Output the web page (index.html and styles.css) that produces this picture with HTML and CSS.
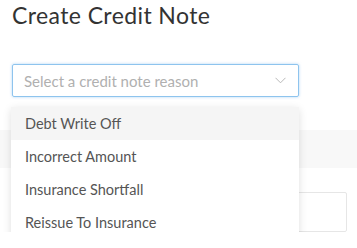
FILE: index.html
```html
<!DOCTYPE html>
<html>
<head>
<meta charset="utf-8">
<link rel="stylesheet" href="styles.css">
</head>
<body>
<div class="page">
  <h1 class="title">Create Credit Note</h1>
  <div class="field">
    <div class="select">
      <span class="placeholder">Select a credit note reason</span>
      <svg class="chevron" width="11" height="7" viewBox="0 0 11 7"><polyline points="0.5,0.8 5.5,5.8 10.5,0.8" fill="none" stroke="#b8b8b8" stroke-width="1"/></svg>
    </div>
    <ul class="menu">
      <li class="item active">Debt Write Off</li>
      <li class="item">Incorrect Amount</li>
      <li class="item">Insurance Shortfall</li>
      <li class="item">Reissue To Insurance</li>
    </ul>
  </div>
</div>
<div class="band"></div>
<div class="page">
  <div class="input"></div>
</div>
</body>
</html>
```
FILE: styles.css
```css
html, body {
  margin: 0;
  padding: 0;
  background: #ffffff;
  font-family: Lato, "Liberation Sans", sans-serif;
}
.page {
  padding: 0 10px 0 12px;
}
.title {
  margin: 0;
  font-size: 23px;
  line-height: 30px;
  font-weight: 400;
  color: #333333;
  letter-spacing: 0.4px;
}
.field {
  position: relative;
  margin-top: 34px;
  width: 287px;
}
.select {
  box-sizing: border-box;
  height: 33px;
  border: 1px solid #8ec4ee;
  border-radius: 2px;
  box-shadow: 0 0 3px rgba(110, 175, 235, 0.55);
  display: flex;
  align-items: center;
  justify-content: space-between;
  padding: 0 12px 0 11px;
}
.placeholder {
  font-size: 15px;
  color: #b0b0b0;
}
.chevron {
  display: block;
}
.menu {
  position: absolute;
  z-index: 2;
  top: 43px;
  left: -1px;
  width: 288px;
  margin: 0;
  padding: 0 0 5px 0;
  list-style: none;
  background: #ffffff;
  box-shadow: 0 2px 8px rgba(0, 0, 0, 0.13);
  border-radius: 2px;
}
.item {
  height: 33px;
  line-height: 33px;
  padding-left: 14px;
  font-size: 14.5px;
  color: #555555;
}
.item.active {
  background: #f5f5f5;
}
.band {
  margin-top: 33px;
  height: 38px;
  background: #f8f8f8;
}
.input {
  margin-top: 24px;
  height: 40px;
  box-sizing: border-box;
  border: 1px solid #e6e6e6;
  border-radius: 2px;
}
```
